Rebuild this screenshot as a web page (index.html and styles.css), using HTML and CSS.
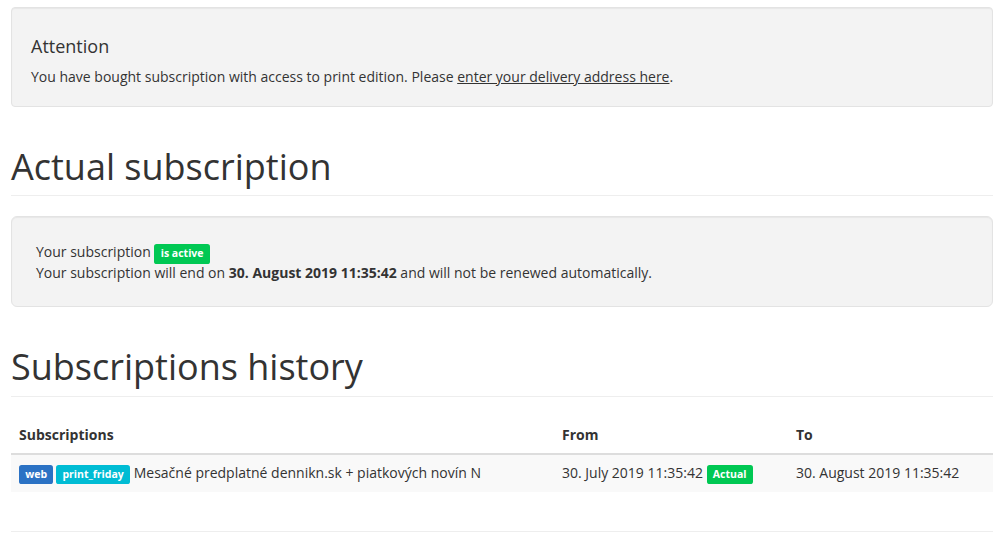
FILE: index.html
```html
<!DOCTYPE html>
<html>
<head>
<meta charset="utf-8">
<link rel="stylesheet" href="styles.css">
</head>
<body>
<div class="page">
  <div class="well">
    <h4 class="well-title">Attention</h4>
    <p class="well-text">You have bought subscription with access to print edition. Please <a href="#">enter your delivery address here</a>.</p>
  </div>

  <h1 class="page-header">Actual subscription</h1>

  <div class="well well-lg">
    <div class="status-line">Your subscription <span class="label label-success">is active</span></div>
    <div>Your subscription will end on <strong>30. August 2019 11:35:42</strong> and will not be renewed automatically.</div>
  </div>

  <h1 class="page-header">Subscriptions history</h1>

  <table class="table">
    <thead>
      <tr>
        <th class="col-sub">Subscriptions</th>
        <th class="col-from">From</th>
        <th class="col-to">To</th>
      </tr>
    </thead>
    <tbody>
      <tr>
        <td><span class="label label-primary">web</span> <span class="label label-info">print_friday</span> Mesačné predplatné dennikn.sk + piatkových novín N</td>
        <td>30. July 2019 11:35:42 <span class="label label-success">Actual</span></td>
        <td>30. August 2019 11:35:42</td>
      </tr>
    </tbody>
  </table>

  <hr class="divider">
</div>
</body>
</html>
```

FILE: styles.css
```css
* { box-sizing: border-box; }
html, body { margin: 0; padding: 0; }
body {
  font-family: "Open Sans", "Liberation Sans", sans-serif;
  font-size: 14px;
  line-height: 20px;
  color: #333;
  background: #fff;
}
.page {
  padding: 7px 5px 0 11px;
}
.well {
  background: #f3f3f3;
  border: 1px solid #e3e3e3;
  border-radius: 4px;
  box-shadow: inset 0 1px 1px rgba(0,0,0,.05);
  padding: 19px;
}
.well-lg {
  padding: 24px 24px 23px;
  border-radius: 6px;
}
.status-line { line-height: 22px; }
.well-title {
  font-size: 18px;
  font-weight: 400;
  line-height: 1.1;
  margin: 10px 0 10px;
}
.well-text { margin: 0; }
.well-text a { color: #333; text-decoration: underline; }
.page-header {
  font-size: 36px;
  font-weight: 400;
  line-height: 1.1;
  margin: 40px 0 20px;
  padding-bottom: 9px;
  border-bottom: 1px solid #eee;
}
strong { font-weight: 700; }
.label {
  display: inline;
  padding: .2em .6em .3em;
  font-size: 75%;
  font-weight: 700;
  line-height: 1;
  color: #fff;
  text-align: center;
  white-space: nowrap;
  vertical-align: baseline;
  border-radius: .25em;
}
.label-success { background: #00c853; }
.label-primary { background: #2b72c4; margin-right: -1px; }
.label-info { background: #00bcd4; }
.table {
  width: 100%;
  border-collapse: collapse;
  border-spacing: 0;
  margin-bottom: 20px;
}
.table th {
  text-align: left;
  font-weight: 700;
  padding: 8px;
  line-height: 20px;
  border-bottom: 2px solid #ddd;
  vertical-align: bottom;
}
.table td {
  padding: 8px 8px 9px;
  line-height: 20px;
  vertical-align: top;
}
.table tbody tr { background: #f9f9f9; }
.col-sub { width: 543px; }
.col-from { width: 234px; }
.col-to { width: 205px; }
.divider {
  margin: 39px 0 0;
  border: 0;
  border-top: 1px solid #eee;
}
```
